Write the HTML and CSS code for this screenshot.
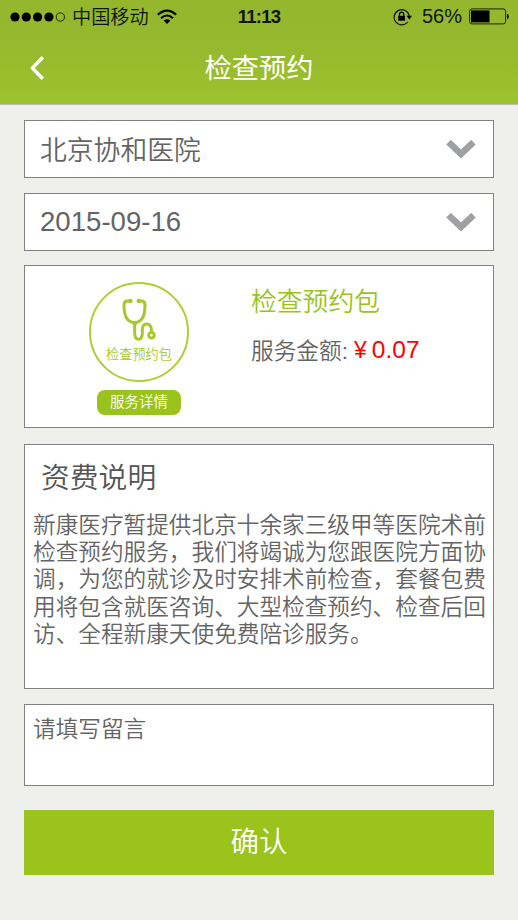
FILE: index.html
```html
<!DOCTYPE html>
<html lang="zh-CN">
<head>
<meta charset="utf-8">
<title>检查预约</title>
<link rel="stylesheet" href="styles.css">
</head>
<body>
<header class="header">
  <div class="status">
    <div class="status-left">
      <svg class="signal" width="56" height="12" viewBox="0 0 56 12">
        <circle cx="5" cy="6" r="4.6"/><circle cx="16.3" cy="6" r="4.6"/><circle cx="27.6" cy="6" r="4.6"/><circle cx="38.9" cy="6" r="4.6"/>
        <circle cx="50.3" cy="6" r="4.1" fill="none" stroke="#10150a" stroke-width="0.9"/>
      </svg>
      <span class="carrier">中国移动</span>
      <svg class="wifi" width="20" height="16" viewBox="0 0 20 16">
        <g fill="none" stroke="#000" stroke-width="2.1">
          <path d="M0.8 5.7Q10 -2.6 19.2 5.7"/>
          <path d="M4 9.2Q10 3.8 16 9.2"/>
        </g>
        <path d="M6.5 11.5Q10 8.8 13.5 11.5L10 15Z"/>
      </svg>
    </div>
    <span class="clock">11:13</span>
    <div class="status-right">
      <svg class="lock" width="20" height="18" viewBox="0 0 20 18">
        <path d="M14.7 14A7.6 7.6 0 1 1 16.2 7.8" fill="none" stroke="#10150a" stroke-width="1.2"/>
        <path d="M13.6 7.7H19L16.3 11.5Z"/>
        <path d="M5.2 7.8H12V12.7H5.2Z"/>
        <path d="M6.5 8V6.2A2.1 2.1 0 0 1 10.7 6.2V8" fill="none" stroke="#000" stroke-width="1.2"/>
      </svg>
      <span class="percent">56%</span>
      <svg class="battery" width="41" height="17" viewBox="0 0 41 17">
        <rect x="0.6" y="0.9" width="36" height="15" rx="2.4" fill="none" stroke="#10150a" stroke-width="0.9"/>
        <rect x="2" y="2.4" width="18.5" height="12"/>
        <path d="M38 5.8Q39.8 6.5 39.8 8.5Q39.8 10.5 38 11.2Z"/>
      </svg>
    </div>
  </div>
  <nav class="nav">
    <svg class="back" width="16" height="26" viewBox="0 0 16 26"><path d="M13.8 2.2L3.4 13L13.8 23.8" fill="none" stroke="#fff" stroke-width="3.4" stroke-linejoin="round"/></svg>
    <h1 class="title">检查预约</h1>
  </nav>
</header>
<main class="content">
  <div class="box select">
    <span class="hospital">北京协和医院</span>
    <svg width="30" height="19" viewBox="0 0 30 19"><path d="M2.5 2.2L15 14L27.5 2.2" fill="none" stroke="#9fa0a4" stroke-width="6.6"/></svg>
  </div>
  <div class="box select">
    <span class="date">2015-09-16</span>
    <svg width="30" height="19" viewBox="0 0 30 19"><path d="M2.5 2.2L15 14L27.5 2.2" fill="none" stroke="#9fa0a4" stroke-width="6.6"/></svg>
  </div>
  <section class="box package">
    <div class="package-left">
      <div class="badge">
        <svg width="34" height="43" viewBox="0 0 34 43">
          <g fill="none" stroke="#a5c92a" stroke-width="3" stroke-linecap="round" stroke-linejoin="round">
            <path d="M8 3H5.2Q2 3 2 7C2 17 4.5 24.5 12.5 24.5C20.5 24.5 23 17 23 7Q23 3 19.8 3H17"/>
            <path d="M12.7 25V35Q12.7 41.2 16.5 41.2Q20.3 41.2 20.3 35V32Q20.3 26 24.7 26Q29.5 26 29.5 33V34"/>
            <circle cx="29.5" cy="37.2" r="2.8"/>
          </g>
          <g fill="#a5c92a"><circle cx="8.4" cy="3" r="2.2"/><circle cx="16.7" cy="3" r="2.2"/><rect x="10.5" y="23" width="4.5" height="4" rx="1.5"/></g>
        </svg>
        <span class="badge-label">检查预约包</span>
      </div>
      <span class="detail">服务详情</span>
    </div>
    <div class="package-info">
      <h2 class="package-name">检查预约包</h2>
      <div class="fee"><span class="fee-label">服务金额:</span><span class="yen">¥</span><span class="price">0.07</span></div>
    </div>
  </section>
  <section class="box notes">
    <h2 class="notes-title">资费说明</h2>
    <p class="notes-text">新康医疗暂提供北京十余家三级甲等医院术前检查预约服务，我们将竭诚为您跟医院方面协调，为您的就诊及时安排术前检查，套餐包费用将包含就医咨询、大型检查预约、检查后回访、全程新康天使免费陪诊服务。</p>
  </section>
  <div class="box message">请填写留言</div>
  <div class="confirm">确认</div>
</main>
</body>
</html>
```
FILE: styles.css
```css
* { box-sizing: border-box; }
body {
  margin: 0;
  height: 920px;
  background: #eff0eb;
  color: #646464;
  font-family: "Liberation Sans", "Noto Sans CJK SC", sans-serif;
  font-weight: 350;
  overflow: hidden;
}
svg { display: block; flex: none; }
h1, h2, p { margin: 0; font-weight: 350; }
.header {
  height: 105px;
  background: linear-gradient(#93b62d, #96ba2d 50%, #9dc22f);
  border-bottom: 1px solid #bdc0b4;
}
.status {
  height: 33px;
  display: grid;
  grid-template-columns: 1fr auto 1fr;
  align-items: center;
  color: #10150a;
  padding: 0 8px 0 10px;
}
.status-left, .status-right { display: flex; align-items: center; }
.status-right { justify-content: flex-end; }
.carrier { font-size: 19.2px; line-height: 33px; margin-left: 6px; position: relative; top: 1px; }
.wifi { margin-left: 8px; }
.clock { font-size: 18.5px; font-weight: 700; letter-spacing: -0.8px; line-height: 33px; margin-left: -2px; }
.percent { font-size: 20px; line-height: 33px; margin: 0 7px 0 9px; }
.nav {
  height: 71px;
  display: grid;
  grid-template-columns: 30px 1fr 30px;
  align-items: center;
  padding: 0 29px 2px;
}
.title { text-align: center; color: #fff; font-size: 27.2px; line-height: 40px; font-weight: 400; padding-top: 3px; }
.content { padding: 15px 24px 0; }
.box { background: #fff; border: 1px solid #828282; margin-bottom: 16px; }
.select {
  height: 58px;
  display: flex;
  align-items: center;
  justify-content: space-between;
  padding: 0 17px 0 15px;
}
.hospital { font-size: 26.8px; line-height: 40px; padding-top: 3px; }
.date { font-size: 27.6px; line-height: 40px; }
.select + .select { margin: -1px 0 14px; }
.package { height: 163px; display: flex; }
.package-left {
  width: 228px;
  padding-top: 16px;
  display: flex;
  flex-direction: column;
  align-items: center;
}
.badge {
  width: 100px;
  height: 100px;
  border: 2px solid #adcf35;
  border-radius: 50%;
  display: flex;
  flex-direction: column;
  align-items: center;
  padding-top: 14px;
}
.badge-label { font-size: 13.2px; line-height: 18px; margin-top: 5px; color: #a5c92a; white-space: nowrap; }
.detail {
  width: 84px;
  height: 25px;
  margin-top: 8px;
  border-radius: 8px;
  background: #9ac31c;
  color: #fff;
  font-size: 14.5px;
  line-height: 24px;
  text-align: center;
}
.package-info { padding: 16px 0 0; margin-left: -2px; }
.package-name { color: #9ac31c; font-size: 25.8px; line-height: 40px; }
.fee { display: flex; align-items: center; height: 40px; margin-top: 8px; }
.fee-label { font-size: 22.7px; margin-top: -2px; }
.yen { color: #f00; font-size: 23px; margin-left: 6px; }
.price { color: #f00; font-size: 24.5px; margin-left: 5px; }
.notes { height: 245px; padding: 12px 8px 0; }
.notes-title { font-size: 28.8px; line-height: 42px; padding-left: 8px; color: #555; }
.notes-text { font-size: 22.65px; line-height: 27.2px; margin-top: 13px; width: 454px; word-break: break-all; }
.message { height: 82px; margin-top: -1px; padding: 9px 8px; font-size: 22.65px; line-height: 30px; }
.confirm {
  margin-top: 24px;
  height: 65px;
  background: #9ac31c;
  color: #fff;
  text-align: center;
  font-size: 28.5px;
  line-height: 65px;
}
```
